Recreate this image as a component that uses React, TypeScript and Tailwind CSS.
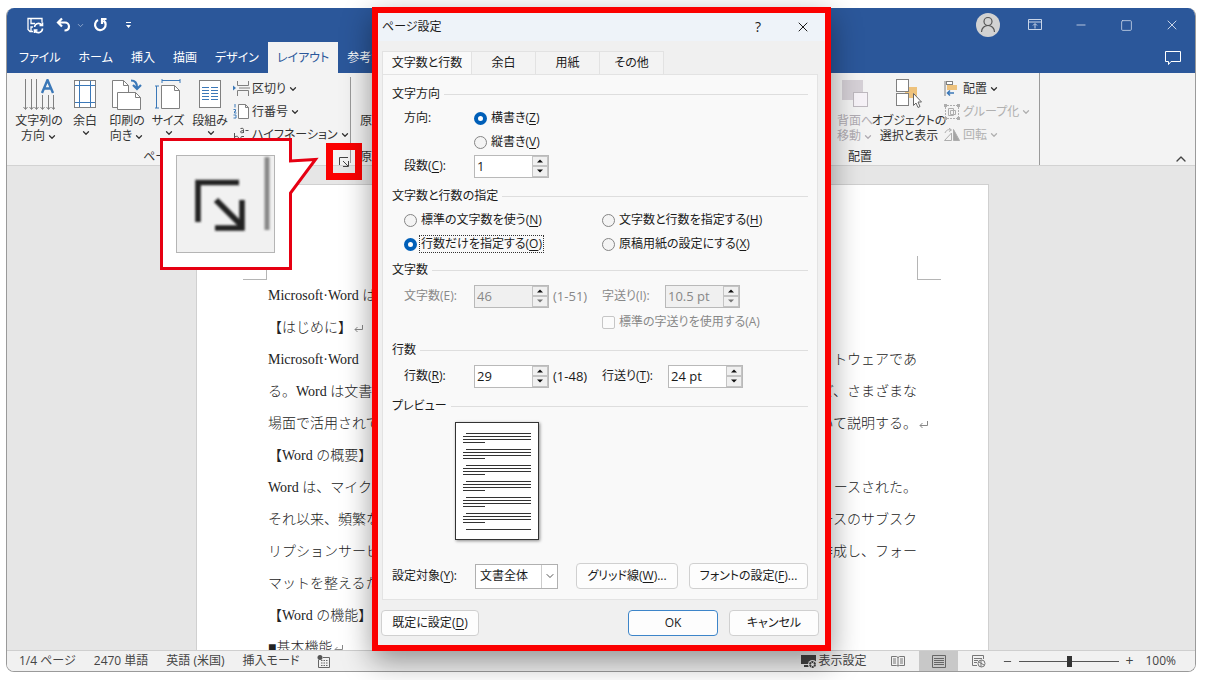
import type { ReactNode } from "react";
import { ChevronDown, ChevronUp, Minus, Square, X } from "lucide-react";

const TABS = ["ファイル", "ホーム", "挿入", "描画", "デザイン", "レイアウト", "参考資料"];
const DIALOG_TABS = [
  { label: "文字数と行数", cls: "w-[90px]" },
  { label: "余白", cls: "w-16" },
  { label: "用紙", cls: "w-16" },
  { label: "その他", cls: "w-16" },
];

const LINES: { left: string; right?: string; mark?: boolean }[] = [
  { left: "Microsoft·Word は" },
  { left: "【はじめに】", mark: true },
  { left: "Microsoft·Word", right: "トウェアであ" },
  { left: "る。Word は文書", right: "ど、さまざまな" },
  { left: "場面で活用されて", right: "いて説明する。", mark: true },
  { left: "【Word の概要】" },
  { left: "Word は、マイク", right: "リースされた。" },
  { left: "それ以来、頻繁な", right: "ースのサブスク" },
  { left: "リプションサービ", right: "作成し、フォー" },
  { left: "マットを整えるた" },
  { left: "【Word の機能】" },
  { left: "■基本機能", mark: true },
];

const BLUE = "#3b78b8";
const GRAY = "#808080";

/* ---------- icons ---------- */

function SaveIcon() {
  return (
    <svg width="17" height="17" viewBox="0 0 17 17" fill="none" stroke="white" strokeWidth="1.3">
      <path d="M6 14.500H3L1 12.500V1.500h14v4M4 1.500v5h4M4 14v-4h2" />
      <path d="M7.500 10a4 4 0 0 1 7.500-1.500M15.500 5.500v3h-3M15.500 11.500a4 4 0 0 1-7.500 2M7.500 16v-3h3" strokeWidth="1.600" />
    </svg>
  );
}

function UndoIcon() {
  return (
    <svg width="16" height="16" viewBox="0 0 16 16" fill="none" stroke="white" strokeWidth="2.2">
      <path d="M6 1.500 2 5.500l4 4M2.500 5.500H9a4 4 0 0 1 4 4c0 2.500-2 4-4.500 4" />
    </svg>
  );
}

function RedoIcon() {
  return (
    <svg width="15" height="16" viewBox="0 0 15 16" fill="none" stroke="white" strokeWidth="2.2">
      <path d="M5 3a5.300 5.300 0 1 0 5.500.5M8 2h5.500M9 2v5" />
    </svg>
  );
}

function TextDirectionIcon() {
  return (
    <svg width="32" height="32" viewBox="0 0 32 32" fill="none" stroke={GRAY}>
      <path d="M2.500 0v30M8.500 0v30M13.500 0v30M19.500 16v14M25.500 16v14M30.500 16v14" />
      <path d="m.5 28 2 2.500 2-2.500M6.500 28l2 2.500 2-2.500M11.500 28l2 2.500 2-2.500M17.500 28l2 2.500 2-2.500M23.500 28l2 2.500 2-2.500M28.500 28l2 2.500 2-2.500" />
      <path d="m19 14 5.500-13L30 14M21 9.500h7" stroke={BLUE} strokeWidth="2.400" />
    </svg>
  );
}

function MarginsIcon() {
  return (
    <svg width="23" height="30" viewBox="0 0 23 30" fill="none">
      <rect x=".5" y="1.500" width="21" height="27" fill="white" stroke={GRAY} />
      <path d="M5.500 2v26M16.500 2v26M1 6.500h20M1 23.500h20" stroke={BLUE} />
    </svg>
  );
}

function OrientationIcon() {
  return (
    <svg width="32" height="32" viewBox="0 0 32 32" fill="none">
      <path d="M1.500 1.500h11l5 5v22h-16z" fill="white" stroke={GRAY} />
      <path d="M12.500 1.500v5h5" stroke={GRAY} />
      <path d="M6.500 13.500h18l5 5v12h-23z" fill="white" stroke={GRAY} />
      <path d="M24.500 13.500v5h5" stroke={GRAY} />
      <path d="M20 1.500c4 0 6 2.500 6 7M22 6l4 4 4-4" stroke={BLUE} strokeWidth="2.200" />
    </svg>
  );
}

function SizeIcon() {
  return (
    <svg width="27" height="31" viewBox="0 0 27 31" fill="none">
      <path d="M6.500 6.500h13l5 5v18h-18z" fill="white" stroke={GRAY} />
      <path d="M19.500 6.500v5h5" stroke={GRAY} />
      <path d="M7 1.500h18M7 0v4M25 0v4M1.500 7v22M0 7h4M0 29h4" stroke={BLUE} />
    </svg>
  );
}

function ColumnsIcon() {
  return (
    <svg width="22" height="30" viewBox="0 0 22 30" fill="none">
      <rect x=".5" y="1.500" width="21" height="27" fill="white" stroke={GRAY} />
      <path d="M3 8.500h7M3 11.500h7M3 14.500h7M3 17.500h7M3 20.500h7M12 8.500h7M12 11.500h7M12 14.500h7M12 17.500h7M12 20.500h7" stroke={BLUE} />
    </svg>
  );
}

function BreaksIcon() {
  return (
    <svg width="17" height="15" viewBox="0 0 17 15" fill="none" stroke={GRAY}>
      <path d="M4.500 0v4.500h11V0M4.500 15V9.500h11V15M6 7h11" />
      <path d="m0 4.500 3 2.500-3 2.500z" fill={BLUE} stroke="none" />
    </svg>
  );
}

function LineNumbersIcon() {
  return (
    <svg width="17" height="15" viewBox="0 0 17 15" fill="none">
      <path d="M5.500.5h7l3 3v11h-10zM12.500.5v3h3" fill="white" stroke={GRAY} />
      <path d="M2 0v3.500M.5 5.500h2v2h-1v1.500h2M.5 11h2.500v3H.5" stroke={BLUE} />
    </svg>
  );
}

function HyphenIcon() {
  return (
    <svg width="17" height="15" viewBox="0 0 17 15" fill="none" stroke="#555">
      <path d="M1.500 6v8M1.500 10q4-2 4 1.500t-4 2M11 9.500q-3.500-1-3.500 2t3.500 2" />
      <path d="M7.500 1.500q3-1 3 1V6M10.500 3.500q-3 0-3 1.500t3 .5M12.500 3.500h3" />
    </svg>
  );
}

function SendBackIcon() {
  return (
    <svg width="27" height="30" viewBox="0 0 27 30">
      <rect x="0" y="1" width="21" height="20" fill="#d5d0d6" />
      <rect x="11.500" y="13.500" width="14" height="14" fill="#f6f2f7" stroke="#bdb8be" />
    </svg>
  );
}

function SelectionIcon() {
  return (
    <svg width="27" height="30" viewBox="0 0 27 30">
      <rect x="9" y="8" width="12" height="11" fill="#eec27c" />
      <rect x=".5" y=".5" width="12" height="12" fill="white" stroke={GRAY} />
      <rect x=".5" y="14.500" width="12" height="12" fill="white" stroke={GRAY} />
      <path d="M17.500 14.500v12l2.500-2.500 2 4.500 2-1-2-4.500h3.500z" fill="white" stroke="#666" />
    </svg>
  );
}

function AlignIcon() {
  return (
    <svg width="14" height="15" viewBox="0 0 14 15" fill="none">
      <path d="M1 0v15" stroke={GRAY} />
      <rect x="2.500" y=".5" width="6" height="3" fill="white" stroke={GRAY} />
      <rect x="3" y="4" width="10" height="5" fill="#eec27c" />
      <path d="M3 12h7M6 9.500 3.500 12 6 14.500" stroke={BLUE} strokeWidth="1.500" />
    </svg>
  );
}

function GroupIcon() {
  return (
    <svg width="16" height="16" viewBox="0 0 16 16" fill="none" stroke="#adadad">
      <path d="M3 1.500h10M3 14.500h10M1.500 3v10M14.500 3v10" strokeDasharray="2 1" />
      <path d="M0 0h3v3H0zM13 0h3v3h-3zM0 13h3v3H0zM13 13h3v3h-3z" fill="#adadad" stroke="none" />
      <path d="M4.500 4.500h5v7h-5zM6.500 6.500h5v4h-5z" />
    </svg>
  );
}

function RotateIcon() {
  return (
    <svg width="16" height="14" viewBox="0 0 16 14" fill="none" stroke="#adadad">
      <path d="M7.500 5v7.500h-7zM1 5c1-3 4-4 6-3M5 0l2.500 2L5 3.500" />
      <path d="M9.500 1.500v11h6z" fill="#a5a5a5" />
    </svg>
  );
}

function LauncherIcon() {
  return (
    <svg width="10" height="10" viewBox="0 0 10 10" fill="none" stroke="#444">
      <path d="M.5 8V.5H9M4 4l5 5M9.500 4v5.500H4" />
    </svg>
  );
}

/* ---------- ribbon ---------- */

function BigButton({ icon, children, cls, disabled }: { icon: ReactNode; children: ReactNode; cls: string; disabled?: boolean }) {
  return (
    <button disabled={disabled} className={`flex shrink-0 flex-col items-center text-xs leading-[15px] whitespace-nowrap ${disabled ? "text-[#b0abb2]" : "text-[#333]"} ${cls}`}>
      <span className="flex h-[34px] items-start justify-center">{icon}</span>
      {children}
    </button>
  );
}

function SmallButton({ icon, label, disabled }: { icon: ReactNode; label: string; disabled?: boolean }) {
  return (
    <button disabled={disabled} className={`flex h-[23px] items-center whitespace-nowrap text-xs ${disabled ? "text-[#b0b0b0]" : "text-[#333]"}`}>
      <span className="w-[19px]">{icon}</span>
      {label}
      <Caret />
    </button>
  );
}

function Caret() {
  return <ChevronDown size={10} strokeWidth={3} className="ml-0.5 inline" />;
}

function Ribbon() {
  return (
    <div className="flex h-[93px] shrink-0 border-b border-[#d2d2d2] bg-[#f3f3f3]">
      <div className="relative w-[344px] shrink-0">
        <div className="flex pt-1.5 pl-2">
          <BigButton icon={<TextDirectionIcon />} cls="w-12">文字列の<span>方向<Caret /></span></BigButton>
          <BigButton icon={<MarginsIcon />} cls="w-11">余白<Caret /></BigButton>
          <BigButton icon={<OrientationIcon />} cls="w-10">印刷の<span>向き<Caret /></span></BigButton>
          <BigButton icon={<SizeIcon />} cls="w-[42px]">サイズ<Caret /></BigButton>
          <BigButton icon={<ColumnsIcon />} cls="w-[42px]">段組み<Caret /></BigButton>
          <div className="-mt-0.5 pl-0.5">
            <SmallButton icon={<BreaksIcon />} label="区切り" />
            <SmallButton icon={<LineNumbersIcon />} label="行番号" />
            <SmallButton icon={<HyphenIcon />} label="ハイフネーション" />
          </div>
        </div>
        <div className="absolute inset-x-0 bottom-0 flex h-4 items-center justify-center pr-3 text-xs text-[#333]">
          <span>ページ設定</span>
        </div>
        <div className="absolute top-1 right-0 h-[86px] w-px bg-[#9a9a9a]" />
        <button aria-label="ページ設定の詳細" className="absolute right-[-11px] bottom-[-15px] flex h-[37px] w-9 items-center justify-center border-7 border-[#fb0000]">
          <LauncherIcon />
        </button>
      </div>
      <div className="flex flex-1 flex-col justify-between pt-10 pl-[9px] text-xs text-[#333]">
        <span className="leading-4">原稿用紙</span>
        <span className="leading-4">原稿用紙</span>
      </div>
      <div className="mr-[155px] flex w-[208px] shrink-0 flex-col justify-between border-r border-[#9a9a9a]">
        <div className="flex pt-1.5">
          <BigButton icon={<SendBackIcon />} cls="w-[46px]" disabled>背面へ<span>移動<Caret /></span></BigButton>
          <BigButton icon={<SelectionIcon />} cls="w-[62px]">オブジェクトの<span>選択と表示</span></BigButton>
          <div className="-mt-0.5 pl-1">
            <SmallButton icon={<AlignIcon />} label="配置" />
            <SmallButton icon={<GroupIcon />} label="グループ化" disabled />
            <SmallButton icon={<RotateIcon />} label="回転" disabled />
          </div>
        </div>
        <span className="pl-4 text-xs leading-4 text-[#333]">配置</span>
      </div>
      <button aria-label="リボンを折りたたむ" className="absolute top-[143px] right-1.5">
        <ChevronUp size={16} className="text-[#444]" />
      </button>
    </div>
  );
}

function TitleBar() {
  return (
    <div className="shrink-0 bg-[#2b579a] text-white">
      <div className="flex h-[34px] items-center justify-between pr-[15px] pl-5">
        <div className="flex items-center">
          <button aria-label="上書き保存" className="mr-3"><SaveIcon /></button>
          <button aria-label="元に戻す" className="mr-1"><UndoIcon /></button>
          <ChevronDown size={9} className="mr-2 text-[#a9bcd8]" />
          <button aria-label="やり直し"><RedoIcon /></button>
          <svg className="ml-[18px]" width="5" height="6" viewBox="0 0 5 6" fill="white"><path d="M0 0h5v1H0zM0 3h5L2.500 6z" /></svg>
        </div>
        <div className="flex items-center text-[#c9d5e8]">
          <svg width="24" height="24" viewBox="0 0 24 24" fill="none">
            <circle cx="12" cy="12" r="12" fill="#d2d2d2" />
            <g stroke="#555" strokeWidth="1.200"><circle cx="12" cy="8.500" r="4" /><path d="M5.500 19c0-4 3-6.500 6.500-6.500s6.500 2.500 6.500 6.500" /></g>
          </svg>
          <svg className="ml-7" width="14" height="12" viewBox="0 0 14 12" fill="none" stroke="currentColor">
            <path d="M.5.5h13v10H.5zM.5 3h13M7 9.500V5M5 6.500l2-2 2 2" />
          </svg>
          <Minus size={14} strokeWidth={1.5} className="ml-8" />
          <Square size={13} strokeWidth={1.5} className="ml-8" />
          <X size={16} strokeWidth={1.5} className="ml-[31px]" />
        </div>
      </div>
      <div className="flex h-[31px] items-center justify-between pr-3.5">
        <nav className="flex h-full pl-[3px] text-xs">
          {TABS.map((t) => (
            <button key={t} className={`h-full px-[9px] whitespace-nowrap ${t === "レイアウト" ? "bg-[#f3f3f3] text-[#2b579a]" : ""}`}>
              {t}
            </button>
          ))}
        </nav>
        <button aria-label="コメント">
          <svg width="16" height="14" viewBox="0 0 16 14" fill="none" stroke="white"><path d="M.5.500h15v10H6l-2.500 3v-3h-3z" /></svg>
        </button>
      </div>
    </div>
  );
}

/* ---------- document ---------- */

function Document() {
  return (
    <main className="min-h-0 flex-1 overflow-hidden bg-[#e6e6e6] pt-[18px] pr-[17px]">
      <div className="relative mx-auto h-[900px] w-[793px] border border-[#d0d0d0] bg-white px-[71px] pt-[95px] font-['Liberation_Serif','Noto_Sans_CJK_JP_Light','Noto_Sans_CJK_JP',serif] text-sm leading-8 text-[#222] [font-feature-settings:normal]">
        <span className="absolute top-[71px] left-[46px] size-6 border-r border-b border-[#b5b5b5]" />
        <span className="absolute top-[71px] right-[47px] size-6 border-b border-l border-[#b5b5b5]" />
        {LINES.map((l, i) => (
          <p key={i} className="flex h-8 justify-between whitespace-nowrap">
            <span>{l.left}{l.mark && !l.right && <Mark />}</span>
            {l.right && <span className="relative">{l.right}{l.mark && <span className="absolute left-full"><Mark /></span>}</span>}
          </p>
        ))}
      </div>
    </main>
  );
}

function Mark() {
  return (
    <svg className="ml-0.5 inline" width="9" height="8" viewBox="0 0 9 8" fill="none" stroke="#888">
      <path d="M8.500 0v4.500H1M3.500 2 1 4.500 3.500 7" />
    </svg>
  );
}

function StatusBar() {
  return (
    <footer className="flex h-[21px] shrink-0 items-center justify-between border-t border-[#cfcfcf] bg-[#f1f1f1] pr-[19px] pl-3 text-xs whitespace-nowrap text-[#444]">
      <div className="flex items-center gap-[18px]">
        <span>1/4 ページ</span>
        <span>2470 単語</span>
        <span>英語 (米国)</span>
        <span>挿入モード</span>
        <svg width="13" height="13" viewBox="0 0 13 13" fill="none" stroke="#666">
          <path d="M1.500 5v7.500h11v-10H6" />
          <path d="M4 5.500h7M4 8h7M4 10.500h7" strokeDasharray="1.500 1" />
          <circle cx="3" cy="2.500" r="2.500" fill="#555" stroke="none" />
        </svg>
      </div>
      <div className="flex h-full items-center">
        <svg width="17" height="15" viewBox="0 0 17 15">
          <path d="M0 1h15v9H0zM3 11h5v2H3z" fill="#444" />
          <circle cx="11.500" cy="10.500" r="4.500" fill="#f1f1f1" />
          <circle cx="11.500" cy="10.500" r="2.500" fill="#f1f1f1" stroke="#444" strokeWidth="2" strokeDasharray="2 .6" />
        </svg>
        <span>表示設定</span>
        <svg className="ml-[25px]" width="14" height="12" viewBox="0 0 14 12" fill="none" stroke="#777">
          <path d="M.5 1.500h5l1.500 1 1.500-1h5v9h-5L7 11l-1.500-.5h-5zM7 2v9M2 4h3M2 6h3M2 8h3M9 4h3M9 6h3M9 8h3" />
        </svg>
        <span className="mx-3.5 flex h-full w-[39px] items-center justify-center bg-[#c8c8c8]">
          <svg width="14" height="13" viewBox="0 0 14 13" fill="none" stroke="#666">
            <path d="M.5.5h13v12H.5zM2 3.500h10M2 5.500h10M2 7.500h10M2 9.500h10" />
          </svg>
        </span>
        <svg width="14" height="13" viewBox="0 0 14 13" fill="none" stroke="#777">
          <path d="M5 10.500H.5V.5h11V4M2 3.500h8M2 5.500h4M2 7.500h3" /><circle cx="9.500" cy="8.500" r="3.500" /><path d="m7 7 5 3M9 5v7" />
        </svg>
        <Minus size={11} className="ml-4" strokeWidth={2} />
        <input type="range" aria-label="ズーム" defaultValue={50} className="mx-1.5 h-3 w-[100px] appearance-none bg-[linear-gradient(#555,#555)] bg-[length:100%_1px] bg-center bg-no-repeat [&::-webkit-slider-thumb]:h-[11px] [&::-webkit-slider-thumb]:w-[5px] [&::-webkit-slider-thumb]:appearance-none [&::-webkit-slider-thumb]:bg-[#333]" />
        <span className="text-sm leading-4">+</span>
        <span className="ml-3">100%</span>
      </div>
    </footer>
  );
}

/* ---------- dialog ---------- */

function Section({ title, children, className = "" }: { title: string; children: ReactNode; className?: string }) {
  return (
    <section className={className}>
      <h2 className="flex h-6 items-center gap-1">
        {title}
        <span className="h-px flex-1 bg-[#dedede]" />
      </h2>
      {children}
    </section>
  );
}

function Key({ text, k }: { text: string; k: string }) {
  return <>{text}(<u className="underline-offset-2">{k}</u>)</>;
}

function Radio({ name, text, k, checked, focused }: { name: string; text: string; k: string; checked?: boolean; focused?: boolean }) {
  return (
    <label className="flex h-6 items-center gap-0.5">
      <input type="radio" name={name} defaultChecked={checked} className="size-[13px] shrink-0 appearance-none rounded-full border border-[#858585] bg-[#f4f4f4] checked:border-4 checked:border-[#005fb8] checked:bg-white" />
      <span className={`border px-px leading-4 ${focused ? "border-dotted border-[#333]" : "border-transparent"}`}><Key text={text} k={k} /></span>
    </label>
  );
}

function Spin({ id, value, disabled }: { id: string; value: string; disabled?: boolean }) {
  return (
    <span className="flex h-[23px] w-[75px] shrink-0 border border-[#b9b9b9]">
      <input id={id} defaultValue={value} disabled={disabled} className={`w-[57px] pl-0.5 text-[13px] ${disabled ? "bg-[#f0f0f0] text-[#888]" : "bg-white"}`} />
      <span className="flex w-4 flex-col">
        <button aria-label="増やす" className="flex flex-1 items-center justify-center border border-[#c4c4c4] bg-[#f0f0f0]">
          <svg width="6" height="4" viewBox="0 0 6 4"><path d="M0 3.500h6L3 .5z" fill="#111" /></svg>
        </button>
        <button aria-label="減らす" className="flex flex-1 items-center justify-center border border-[#c4c4c4] bg-[#f0f0f0]">
          <svg width="6" height="4" viewBox="0 0 6 4"><path d="M0 .5h6L3 3.500z" fill={disabled ? "#777" : "#111"} /></svg>
        </button>
      </span>
    </span>
  );
}

function PushButton({ children, cls }: { children: ReactNode; cls: string }) {
  return <button className={`h-[26px] rounded-[4px] border bg-[#fdfdfd] whitespace-nowrap ${cls}`}>{children}</button>;
}

function Preview() {
  const rows = [0, 1, 2, 3, 4, 5];
  return (
    <svg className="mt-1 ml-[63px] shadow-[1px_1px_3px_rgba(0,0,0,0.45)]" width="84" height="118" viewBox="0 0 84 118" stroke="#333">
      <rect x=".5" y=".5" width="83" height="117" fill="white" />
      {rows.map((r) => (
        <path key={r} transform={`translate(0 ${r * 16})`} d="M11 11.500h65M8 14.500h68M8 17.500h68M8 20.500h22" />
      ))}
      <path d="M11 107.500h65" />
    </svg>
  );
}

function PageSetupDialog() {
  return (
    <div role="dialog" aria-label="ページ設定" className="absolute top-[7px] left-[372px] flex w-[459px] flex-col border-6 border-[#fb0000] bg-[#f0f0f0] text-xs leading-4 text-[#1a1a1a] shadow-[0_10px_28px_rgba(0,0,0,0.4)]">
      <header className="flex h-7 items-center bg-[#eef3f9] pr-3.5 pl-1">
        <span className="flex-1">ページ設定</span>
        <button aria-label="ヘルプ" className="mr-[34px] text-sm">?</button>
        <button aria-label="閉じる"><X size={16} strokeWidth={1.5} /></button>
      </header>
      <div className="flex pt-2.5 pl-1">
        {DIALOG_TABS.map((t, i) => (
          <button key={t.label} className={`h-[23px] border-t border-r border-[#e2e2e2] ${i === 0 ? "border-l bg-[#f9f9f9]" : "bg-[#f3f3f3]"} ${t.cls}`}>
            {t.label}
          </button>
        ))}
      </div>
      <div className="mr-[7px] ml-1 border border-[#e3e3e3] bg-[#f9f9f9] pt-[7px] pr-[9px] pb-2.5 pl-[9px]">
        <Section title="文字方向">
          <div className="flex h-6 items-center pl-3"><span className="w-[70px]">方向:</span><Radio name="dir" text="横書き" k="Z" checked /></div>
          <div className="flex h-6 items-center pl-[82px]"><Radio name="dir" text="縦書き" k="V" /></div>
          <div className="flex h-6 items-center pl-3"><label htmlFor="cols" className="w-[70px]"><Key text="段数" k="C" />:</label><Spin id="cols" value="1" /></div>
        </Section>
        <Section title="文字数と行数の指定" className="mt-1.5">
          <div className="grid grid-cols-[198px_1fr] pl-3">
            <Radio name="grid" text="標準の文字数を使う" k="N" />
            <Radio name="grid" text="文字数と行数を指定する" k="H" />
            <Radio name="grid" text="行数だけを指定する" k="O" checked focused />
            <Radio name="grid" text="原稿用紙の設定にする" k="X" />
          </div>
        </Section>
        <Section title="文字数" className="mt-0.5">
          <div className="mt-0.5 flex h-6 items-center pl-3 text-[#888]">
            <label htmlFor="chars" className="w-[70px]">文字数(E):</label><Spin id="chars" value="46" disabled />
            <span className="w-[53px] pl-1 text-[13px]">(1-51)</span>
            <label htmlFor="pitch" className="w-[63px]">字送り(I):</label><Spin id="pitch" value="10.5 pt" disabled />
          </div>
          <label className="mt-0.5 flex h-6 items-center gap-1 pl-[210px] text-[#888]">
            <input type="checkbox" disabled className="size-[13px] appearance-none rounded-[2px] border border-[#c6c6c6] bg-[#fbfbfb]" />
            標準の字送りを使用する(A)
          </label>
        </Section>
        <Section title="行数" className="mt-1">
          <div className="mt-0.5 flex h-6 items-center pl-3">
            <label htmlFor="lines" className="w-[70px]"><Key text="行数" k="R" />:</label><Spin id="lines" value="29" />
            <span className="w-[53px] pl-1 text-[13px]">(1-48)</span>
            <label htmlFor="linepitch" className="w-[66px]"><Key text="行送り" k="T" />:</label><Spin id="linepitch" value="24 pt" />
          </div>
        </Section>
        <Section title="プレビュー" className="mt-1.5">
          <Preview />
        </Section>
        <div className="mt-[23px] flex items-center">
          <label htmlFor="target" className="w-[83px]"><Key text="設定対象" k="Y" />:</label>
          <span className="relative flex">
            <select id="target" className="h-[25px] w-[83px] appearance-none border border-[#b0b0b0] bg-white pl-1"><option>文書全体</option></select>
            <span className="pointer-events-none absolute inset-y-px right-px flex w-4 items-center justify-center border-l border-[#ccc]"><ChevronDown size={12} strokeWidth={1.5} /></span>
          </span>
          <PushButton cls="ml-[18px] w-[102px] border-[#d0d0d0]"><Key text="グリッド線" k="W" />...</PushButton>
          <PushButton cls="ml-auto w-[119px] border-[#d0d0d0]"><Key text="フォントの設定" k="F" />...</PushButton>
        </div>
      </div>
      <div className="flex gap-[11px] pt-2.5 pr-1.5 pb-[9px] pl-[3px]">
        <PushButton cls="mr-auto w-[98px] border-[#d0d0d0]"><Key text="既定に設定" k="D" /></PushButton>
        <PushButton cls="w-[90px] border-[#3d85c9]">OK</PushButton>
        <PushButton cls="w-[90px] border-[#d0d0d0]">キャンセル</PushButton>
      </div>
    </div>
  );
}

// Enlarged view of the dialog launcher, pointing at the real one
function Callout() {
  return (
    <svg className="absolute top-[138px] left-40" width="160" height="132" viewBox="0 0 160 132" fill="none">
      <defs>
        <filter id="soft" x="-20%" y="-20%" width="140%" height="140%"><feGaussianBlur stdDeviation="1.300" /></filter>
      </defs>
      <path d="M1.500 1.500h129v21.500l25-1.500-25 33.500v75.500H1.500z" fill="white" stroke="#e60012" strokeWidth="3" />
      <rect x="16.500" y="17.500" width="98" height="97" fill="#f1f1f1" stroke="#b5b5b5" />
      <g filter="url(#soft)">
        <path d="M38 84V44.500h41" stroke="#222" strokeWidth="5.500" />
        <path d="m56 62 26 26" stroke="#222" strokeWidth="6" />
        <path d="M82 62v28H55" stroke="#222" strokeWidth="5.500" />
        <path d="M107 19v73" stroke="#888" strokeWidth="5" />
      </g>
    </svg>
  );
}

export default function App() {
  return (
    <div className="relative h-screen overflow-hidden bg-white pt-2 pr-2.5 pb-2 pl-1.5 font-['Open_Sans','Noto_Sans_CJK_JP',sans-serif] [font-feature-settings:'palt']">
      <div className="relative flex h-full flex-col overflow-hidden rounded-lg border border-t-0 border-[#9a9a9a]">
        <TitleBar />
        <Ribbon />
        <Document />
        <StatusBar />
      </div>
      <PageSetupDialog />
      <Callout />
    </div>
  );
}
